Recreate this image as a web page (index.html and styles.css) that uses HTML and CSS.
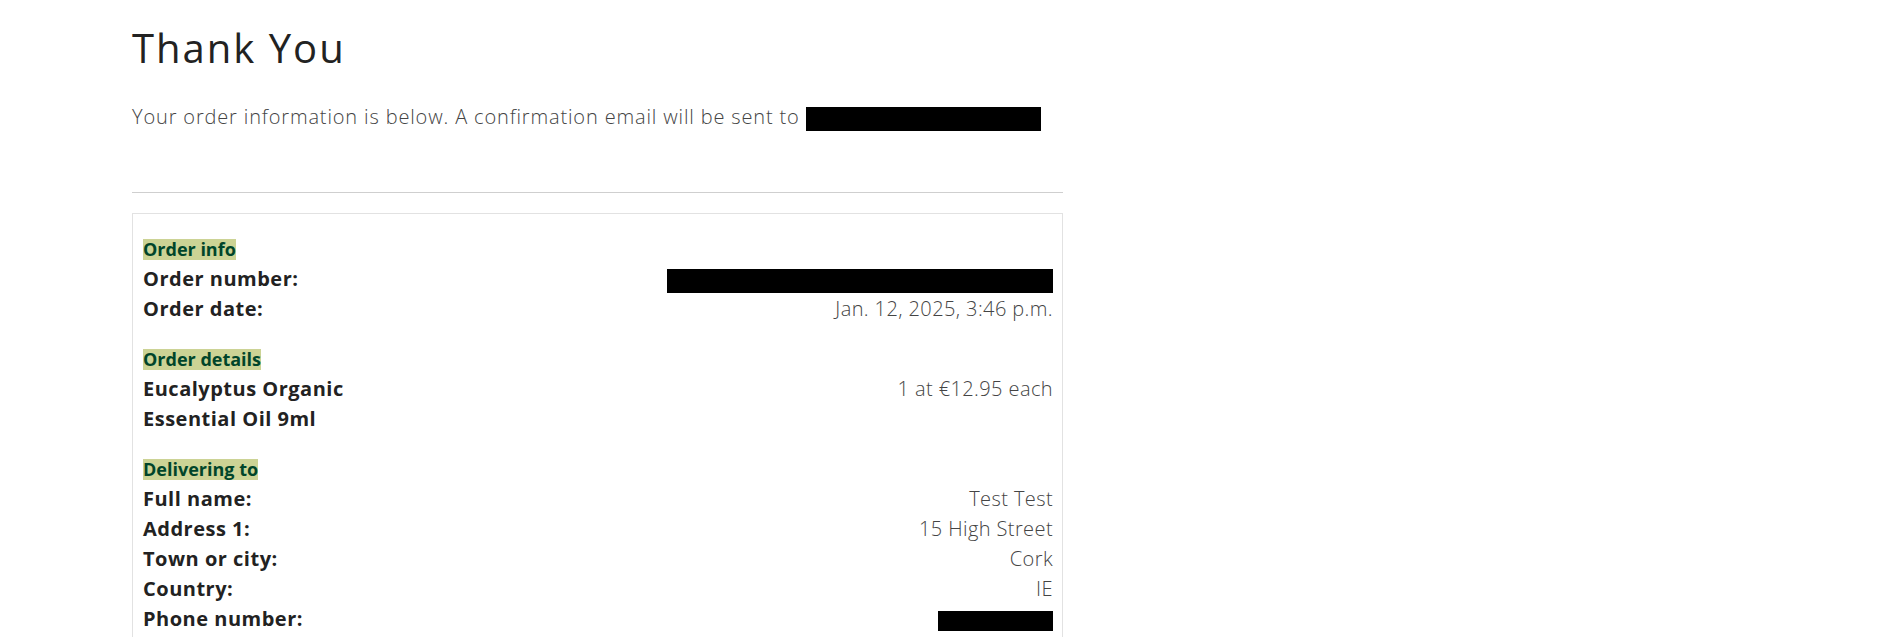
FILE: index.html
```html
<!DOCTYPE html>
<html lang="en">
<head>
<meta charset="utf-8">
<title>Thank You</title>
<link rel="stylesheet" href="styles.css">
</head>
<body>
<main class="page">
  <div class="content">
    <h1 class="title">Thank You</h1>
    <p class="lead">Your order information is below. A confirmation email will be sent to <span class="redact redact-email"></span></p>
    <hr class="divider">
    <section class="order-box">
      <div class="block">
        <p class="heading"><span class="tag">Order info</span></p>
        <div class="row"><div class="label">Order number:</div><div class="value"><span class="redact redact-number"></span></div></div>
        <div class="row"><div class="label">Order date:</div><div class="value">Jan. 12, 2025, 3:46 p.m.</div></div>
      </div>
      <div class="block">
        <p class="heading"><span class="tag">Order details</span></p>
        <div class="row"><div class="label">Eucalyptus Organic Essential Oil 9ml</div><div class="value">1 at €12.95 each</div></div>
      </div>
      <div class="block">
        <p class="heading"><span class="tag">Delivering to</span></p>
        <div class="row"><div class="label">Full name:</div><div class="value">Test Test</div></div>
        <div class="row"><div class="label">Address 1:</div><div class="value">15 High Street</div></div>
        <div class="row"><div class="label">Town or city:</div><div class="value">Cork</div></div>
        <div class="row"><div class="label">Country:</div><div class="value">IE</div></div>
        <div class="row"><div class="label">Phone number:</div><div class="value"><span class="redact redact-phone"></span></div></div>
      </div>
    </section>
  </div>
</main>
</body>
</html>
```

FILE: styles.css
```css
html, body {
  margin: 0;
  padding: 0;
  background: #fff;
}
body {
  font-family: "Open Sans", "Noto Sans", sans-serif;
  color: #333;
}
.page {
  padding-left: 132px;
}
.content {
  width: 931px;
}
.title {
  margin: 24px 0 0;
  font-size: 40px;
  line-height: 48px;
  font-weight: 400;
  letter-spacing: 2px;
  color: #222;
}
.lead {
  margin: 30px 0 0;
  font-size: 20px;
  line-height: 30px;
  font-weight: 300;
  letter-spacing: 0.85px;
  color: #444;
}
.redact {
  display: inline-block;
  background: #000;
  vertical-align: middle;
}
.redact-email {
  width: 235px;
  height: 24px;
}
.redact-number {
  width: 386px;
  height: 24px;
}
.redact-phone {
  width: 115px;
  height: 20px;
}
.divider {
  margin: 60px 0 20px;
  border: 0;
  border-top: 1px solid #cfcfcf;
  height: 0;
}
.order-box {
  border: 1px solid #e2e2e2;
  padding: 20px 9px 20px 10px;
}
.block + .block {
  margin-top: 20px;
}
.heading {
  margin: 0;
  font-size: 18px;
  line-height: 30px;
  font-weight: 700;
}
.tag {
  display: inline-block;
  line-height: 21px;
  background: #ccd395;
  color: #00452a;
}
.row {
  display: grid;
  grid-template-columns: 270px 1fr;
  font-size: 20px;
  line-height: 30px;
}
.label {
  font-weight: 700;
  letter-spacing: 0.5px;
  color: #222;
}
.value {
  text-align: right;
  font-weight: 300;
  letter-spacing: 0.4px;
  color: #444;
}
```
